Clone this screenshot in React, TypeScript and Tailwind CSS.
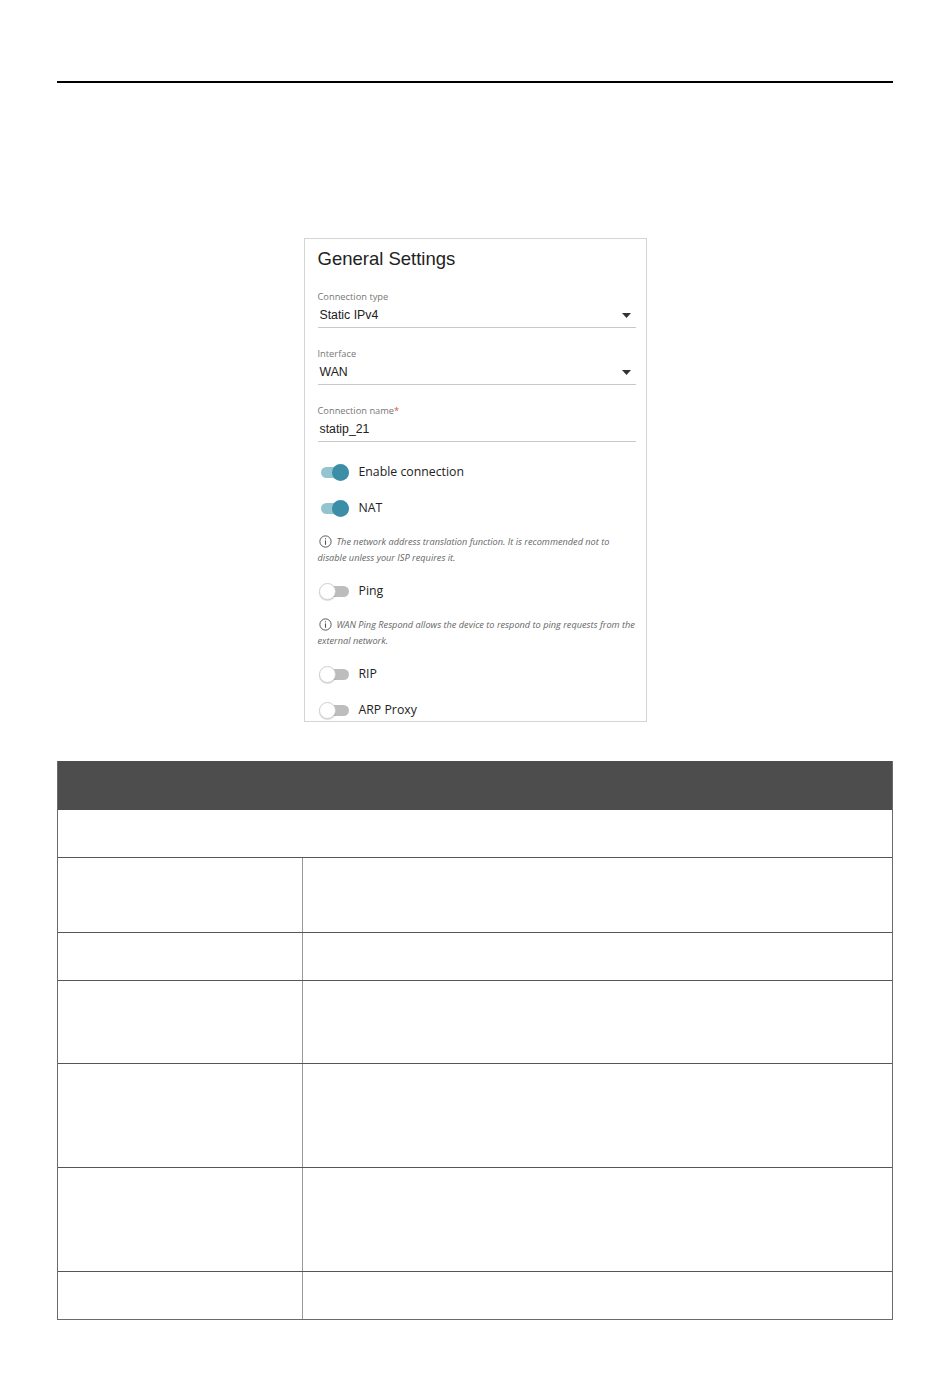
import React from "react";

function Toggle({ on }: { on: boolean }) {
    return (
        <div className="relative w-[30px] h-[18px] flex items-center">
            <div className={`absolute left-[2px] right-0 h-[11px] rounded-full ${on ? "bg-[#93c4d0]" : "bg-[#bdbdbd]"}`} />
            {on ? (
                <div className="absolute right-0 w-[17px] h-[17px] rounded-full bg-[#3b8ea5]" />
            ) : (
                <div className="absolute left-0 w-[17px] h-[17px] rounded-full bg-white border border-[#cfcfcf] shadow-[0_1px_1px_rgba(0,0,0,0.15)]" />
            )}
        </div>
    );
}

function Field({ label, value, required, select }: { label: string; value: string; required?: boolean; select?: boolean }) {
    return (
        <div className="flex flex-col mr-[10px]">
            <div className="text-[9.3px] leading-[13px] text-[#777] font-['Open_Sans',sans-serif]">
                {label}
                {required && <span className="text-[#d0574a]">*</span>}
            </div>
            <div className="flex items-center justify-between h-[25px] pl-[2px] pr-[5px] border-b border-[#c8c8c8]">
                <span className="text-[12.3px] text-[#222] font-['Liberation_Sans',Arial,sans-serif]">{value}</span>
                {select && (
                    <svg width="9" height="5" viewBox="0 0 9 5">
                        <path d="M0 0 L9 0 L4.5 5 Z" fill="#333" />
                    </svg>
                )}
            </div>
        </div>
    );
}

function Info({ children }: { children: React.ReactNode }) {
    return (
        <div className="text-[9.2px] leading-[16px] italic text-[#666] font-['Open_Sans',sans-serif] pr-[4px]">
            <svg width="13" height="13" viewBox="0 0 12 12" className="inline-block ml-[1px] mr-[5px] -mt-[2px] align-middle">
                <circle cx="6" cy="6" r="5.2" fill="none" stroke="#555" strokeWidth="0.9" />
                <rect x="5.5" y="5" width="1" height="4" fill="#555" />
                <rect x="5.5" y="3" width="1" height="1" fill="#555" />
            </svg>
            {children}
        </div>
    );
}

function SwitchRow({ on, label }: { on: boolean; label: string }) {
    return (
        <div className="flex items-center gap-[10px] h-[20px] pl-[1px]">
            <Toggle on={on} />
            <span className="text-[12.3px] text-[#222] font-['Open_Sans',sans-serif]">{label}</span>
        </div>
    );
}

const rows = [75, 48, 83, 104, 104, 47];

export default function App() {
    return (
        <div className="w-[950px] h-[1378px] bg-white pt-[81px] px-[57px]">
            <div className="h-[2px] bg-black" />

            <div className="flex justify-center pt-[155px]">
                <div className="w-[343px] h-[484px] border border-[#d4d4d4] pl-[13px] pt-[7px] overflow-hidden">
                    <div className="text-[18.5px] text-[#222] font-['Liberation_Sans',Arial,sans-serif] leading-[26px]">General Settings</div>

                    <div className="mt-[18px] flex flex-col gap-[19px]">
                        <Field label="Connection type" value="Static IPv4" select />
                        <Field label="Interface" value="WAN" select />
                        <Field label="Connection name" value="statip_21" required />
                    </div>

                    <div className="mt-[20px] flex flex-col">
                        <SwitchRow on label="Enable connection" />
                        <div className="h-[16px]" />
                        <SwitchRow on label="NAT" />
                        <div className="mt-[16px]">
                            <Info>
                                The network address translation function. It is recommended not to
                                <br />
                                disable unless your ISP requires it.
                            </Info>
                        </div>
                        <div className="mt-[15px]">
                            <SwitchRow on={false} label="Ping" />
                        </div>
                        <div className="mt-[16px]">
                            <Info>WAN Ping Respond allows the device to respond to ping requests from the external network.</Info>
                        </div>
                        <div className="mt-[15px]">
                            <SwitchRow on={false} label="RIP" />
                        </div>
                        <div className="h-[16px]" />
                        <SwitchRow on={false} label="ARP Proxy" />
                    </div>
                </div>
            </div>

            <div className="mt-[39px] border-l border-r border-b border-[#6b6b6b]">
                <div className="h-[49px] bg-[#4d4d4d]" />
                <div className="h-[48px] border-b border-[#555]" />
                {rows.map((h, i) => (
                    <div
                        key={i}
                        className={`flex ${i < rows.length - 1 ? "border-b border-[#555]" : ""}`}
                        style={{ height: h }}
                    >
                        <div className="w-[245px] border-r border-[#999]" />
                        <div className="flex-1" />
                    </div>
                ))}
            </div>
        </div>
    );
}
